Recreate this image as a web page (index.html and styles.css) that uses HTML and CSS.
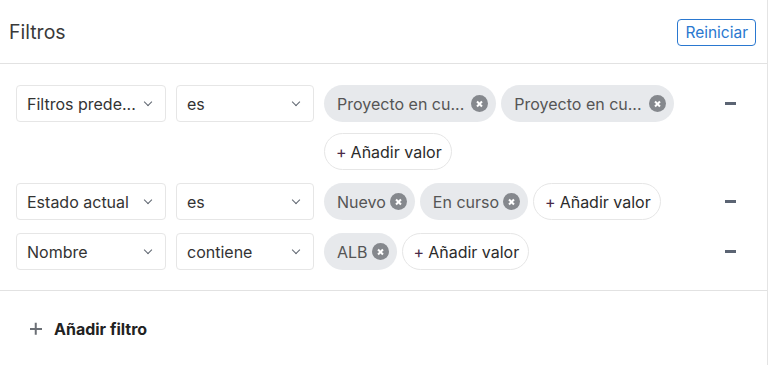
FILE: index.html
```html
<!DOCTYPE html>
<html lang="es">
<head>
  <meta charset="UTF-8" />
  <title>Filtros</title>
  <link rel="stylesheet" href="styles.css">
</head>
<body>

<div class="panel">
  <div class="panel-header">
    <div class="panel-title">Filtros</div>
    <button class="reset-btn">Reiniciar</button>
  </div>

  <div class="filter-list">
    <div class="filter-row">
      <div class="select field"><span class="select-text">Filtros prede...</span><span class="chevron"></span></div>
      <div class="select operator"><span class="select-text">es</span><span class="chevron"></span></div>
      <div class="values">
        <span class="chip"><span class="chip-label truncated">Proyecto en cu...</span><span class="chip-x"></span></span>
        <span class="chip"><span class="chip-label truncated">Proyecto en cu...</span><span class="chip-x"></span></span>
        <span class="add-value"><span class="plus">+</span> Añadir valor</span>
      </div>
      <div class="remove"><span class="minus"></span></div>
    </div>

    <div class="filter-row">
      <div class="select field"><span class="select-text">Estado actual</span><span class="chevron"></span></div>
      <div class="select operator"><span class="select-text">es</span><span class="chevron"></span></div>
      <div class="values">
        <span class="chip"><span class="chip-label">Nuevo</span><span class="chip-x"></span></span>
        <span class="chip"><span class="chip-label">En curso</span><span class="chip-x"></span></span>
        <span class="add-value"><span class="plus">+</span> Añadir valor</span>
      </div>
      <div class="remove"><span class="minus"></span></div>
    </div>

    <div class="filter-row">
      <div class="select field"><span class="select-text">Nombre</span><span class="chevron"></span></div>
      <div class="select operator"><span class="select-text">contiene</span><span class="chevron"></span></div>
      <div class="values">
        <span class="chip"><span class="chip-label">ALB</span><span class="chip-x"></span></span>
        <span class="add-value"><span class="plus">+</span> Añadir valor</span>
      </div>
      <div class="remove"><span class="minus"></span></div>
    </div>
  </div>

  <div class="panel-footer">
    <span class="add-filter-icon"></span>
    <span class="add-filter">Añadir filtro</span>
  </div>
</div>

</body>
</html>
```

FILE: styles.css
```css
body {
  margin: 0;
  font-family: Inter, "Noto Sans", sans-serif;
  background-color: #fff;
  color: #333;
}

.panel {
  width: 767px;
  height: 365px;
  border-right: 1px solid #e4e4e4;
}

.panel-header {
  display: flex;
  justify-content: space-between;
  align-items: center;
  height: 63px;
  padding: 0 11px 0 9px;
  border-bottom: 1px solid #e2e2e2;
}

.panel-title {
  font-size: 19.5px;
  color: #3a3a3a;
}

.reset-btn {
  height: 27px;
  padding: 0 7px;
  font-family: inherit;
  font-size: 15.5px;
  color: #2a78d0;
  background: #fff;
  border: 1px solid #2a78d0;
  border-radius: 4px;
  margin-top: 2px;
}

.filter-list {
  display: flex;
  flex-direction: column;
  gap: 13px;
  padding: 21px 0 20px 16px;
  border-bottom: 1px solid #e2e2e2;
}

.filter-row {
  display: flex;
  align-items: flex-start;
}

.select {
  display: flex;
  align-items: center;
  justify-content: space-between;
  box-sizing: border-box;
  height: 37px;
  padding: 0 14px 0 10px;
  border: 1px solid #e6e6e6;
  border-radius: 4px;
  font-size: 16px;
  color: #333;
  margin-right: 10px;
}

.field {
  width: 150px;
}

.operator {
  width: 138px;
}

.chevron {
  width: 5px;
  height: 5px;
  border-right: 1.5px solid #5f6670;
  border-bottom: 1.5px solid #5f6670;
  transform: rotate(45deg);
  margin-top: -4px;
}

.values {
  display: flex;
  flex-wrap: wrap;
  gap: 11px 5px;
  width: 380px;
}

.chip {
  display: inline-flex;
  align-items: center;
  height: 37px;
  padding: 0 4px 0 13px;
  border-radius: 19px;
  background-color: #e7e9ec;
  font-size: 16px;
  color: #555;
  white-space: nowrap;
}

.chip-label {
  margin-right: 4px;
}

.chip-label.truncated {
  margin-right: 7px;
}

.chip-x {
  position: relative;
  width: 17px;
  height: 17px;
  border-radius: 50%;
  background-color: #85888d;
  margin-right: 4px;
}

.chip-x::before,
.chip-x::after {
  content: "";
  position: absolute;
  left: 5px;
  top: 7.5px;
  width: 7px;
  height: 2px;
  background: #fff;
  transform: rotate(45deg);
}

.chip-x::after {
  transform: rotate(-45deg);
}

.add-value {
  display: inline-flex;
  align-items: center;
  box-sizing: border-box;
  height: 37px;
  padding: 0 9px 0 11px;
  border: 1px solid #e6e6e6;
  border-radius: 19px;
  font-size: 16px;
  color: #2b2b2b;
}

.plus {
  color: #4a2a48;
  margin-right: 4px;
}

.remove {
  display: flex;
  align-items: center;
  justify-content: center;
  width: 40px;
  height: 37px;
  margin-left: 6px;
}

.minus {
  width: 11px;
  height: 2.5px;
  background-color: #5b6473;
}

.panel-footer {
  display: flex;
  align-items: center;
  padding: 28px 0 0 30px;
}

.add-filter-icon {
  position: relative;
  width: 12px;
  height: 12px;
  margin-right: 12px;
}

.add-filter-icon::before,
.add-filter-icon::after {
  content: "";
  position: absolute;
  left: 0;
  top: 5px;
  width: 12px;
  height: 1.5px;
  background: #6b6f75;
}

.add-filter-icon::after {
  transform: rotate(90deg);
}

.add-filter {
  font-size: 16px;
  font-weight: 700;
  color: #222;
}
```
